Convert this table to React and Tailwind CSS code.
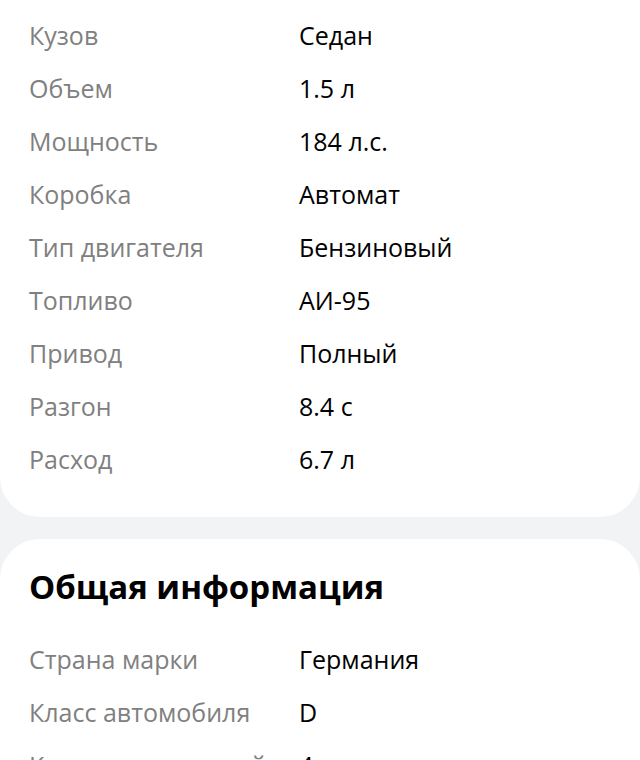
const specs = [
  ["Кузов", "Седан"],
  ["Объем", "1.5 л"],
  ["Мощность", "184 л.с."],
  ["Коробка", "Автомат"],
  ["Тип двигателя", "Бензиновый"],
  ["Топливо", "АИ-95"],
  ["Привод", "Полный"],
  ["Разгон", "8.4 с"],
  ["Расход", "6.7 л"],
];

const general = [
  ["Страна марки", "Германия"],
  ["Класс автомобиля", "D"],
  ["Количество дверей", "4"],
];

const Row = ({ label, value }) => (
  <div className="flex items-center h-[53px]">
    <span className="w-[270px] shrink-0 text-[#808080]">{label}</span>
    <span className="text-black">{value}</span>
  </div>
);

export default function App() {
  return (
    <div
      className="h-[760px] overflow-hidden bg-[#f2f3f5] text-[25px] leading-[30px]"
      style={{ fontFamily: "'Open Sans', 'Noto Sans', sans-serif" }}
    >
      <div className="bg-white rounded-b-[40px] px-[29px] pt-[8px] pb-[32px]">
        {specs.map(([l, v]) => (
          <Row key={l} label={l} value={v} />
        ))}
      </div>
      <div className="mt-[22px] bg-white rounded-t-[40px] px-[29px] pt-[28px]">
        <h2 className="text-[33px] leading-[40px] font-bold text-black mb-[25px]">
          Общая информация
        </h2>
        {general.map(([l, v]) => (
          <Row key={l} label={l} value={v} />
        ))}
      </div>
    </div>
  );
}
